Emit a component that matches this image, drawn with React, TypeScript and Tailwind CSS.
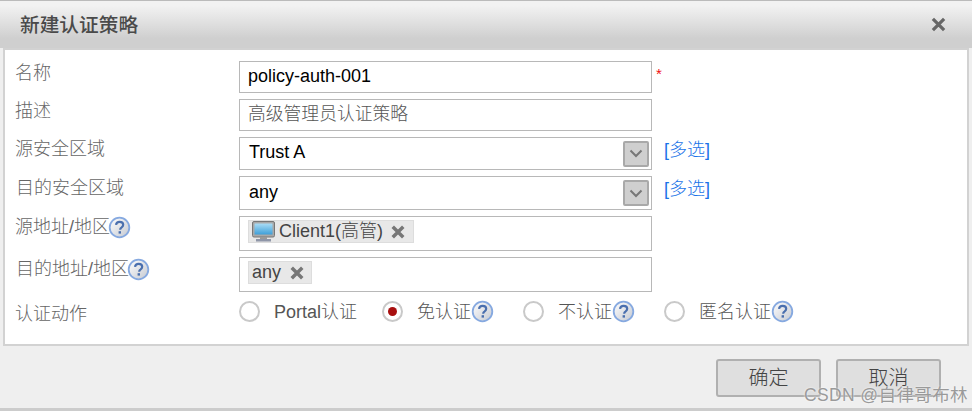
import React from "react";

const FONT = "font-['Liberation_Sans','Noto_Sans_CJK_SC',sans-serif]";

function Help() {
  const id = React.useId();
  return (
    <svg width="23" height="23" viewBox="0 0 23 23" className="shrink-0">
      <defs>
        <linearGradient id={id} x1="0" y1="0" x2="1" y2="1">
          <stop offset="0" stopColor="#ffffff" />
          <stop offset="1" stopColor="#c4c8d0" />
        </linearGradient>
      </defs>
      <circle cx="11.5" cy="11.5" r="9.8" fill={`url(#${id})`} stroke="#86a9e0" strokeWidth="1.8" />
      <path d="M8 8.8c.3-2 1.7-3 3.6-3 2.1 0 3.6 1.2 3.6 3 0 1.4-.8 2.1-1.8 2.8-.9.6-1.2 1-1.2 2.1" fill="none" stroke="#4a6fae" strokeWidth="2.2" />
      <rect x="10.6" y="15.2" width="2.4" height="2.4" fill="#4a6fae" />
    </svg>
  );
}

function Cross({ size = 14, color = "#777", width = 3 }: { size?: number; color?: string; width?: number }) {
  return (
    <svg width={size} height={size} viewBox="0 0 12 12" className="shrink-0">
      <path d="M1.5 1.5l9 9M10.5 1.5l-9 9" stroke={color} strokeWidth={width} />
    </svg>
  );
}

function Monitor() {
  return (
    <svg width="23" height="21" viewBox="0 0 23 21" className="shrink-0">
      <defs>
        <linearGradient id="scr" x1="0" y1="0" x2="0" y2="1">
          <stop offset="0" stopColor="#a9dcf5" />
          <stop offset="1" stopColor="#3f9fd8" />
        </linearGradient>
      </defs>
      <rect x="0.5" y="0.5" width="22" height="15.5" rx="1.5" fill="#a8a8a8" stroke="#777" />
      <rect x="2.5" y="2.5" width="18" height="11" fill="url(#scr)" />
      <rect x="8" y="16" width="7" height="2" fill="#999" />
      <rect x="4" y="18" width="15" height="2.5" fill="#8f96a8" />
    </svg>
  );
}

function Chevron() {
  return (
    <div className="w-[26px] h-[26px] bg-[#cfcfcf] border-2 border-[#a9a9a9] rounded-[2px] flex items-center justify-center">
      <svg width="14" height="9" viewBox="0 0 14 9">
        <path d="M1.5 1.5L7 7l5.5-5.5" fill="none" stroke="#777" strokeWidth="2" />
      </svg>
    </div>
  );
}

function Row({ label, labelPl = "pl-0", labelPt, h, mb, help, children, extra }: {
  label: string; labelPl?: string; labelPt: string; h: string; mb: string; help?: boolean; children: React.ReactNode; extra?: React.ReactNode;
}) {
  return (
    <div className={`flex ${h} ${mb}`}>
      <div className={`w-[224px] shrink-0 flex items-start ${labelPl} ${labelPt} text-[#666] text-[18px] leading-[22px] font-light`}>
        <span>{label}</span>
        {help && <span className="-ml-[2px]"><Help /></span>}
      </div>
      <div className="w-[413px] shrink-0 border border-[#b8b8b8] bg-white flex items-center">
        {children}
      </div>
      {extra}
    </div>
  );
}

function Multi({ pt }: { pt: string }) {
  return <a className={`ml-[12px] ${pt} text-[#1a73e8] text-[18px] leading-[22px] font-light`}>[多选]</a>;
}

function Radio({ checked, label, help, w, gap }: { checked?: boolean; label: string; help?: boolean; w: string; gap: string }) {
  return (
    <div className={`flex items-center ${w}`}>
      <span className="w-[21px] h-[21px] rounded-full border-2 border-[#c9c9c9] bg-white flex items-center justify-center shrink-0">
        {checked && <span className="w-[9px] h-[9px] rounded-full bg-[#a80f0f]" />}
      </span>
      <span className={`${gap} pt-[2px] text-[#555] text-[18px] leading-[22px] font-light whitespace-nowrap`}>{label}</span>
      {help && <Help />}
    </div>
  );
}

export default function App() {
  return (
    <div className={`relative w-[972px] h-[411px] overflow-hidden flex flex-col bg-[#efefef] border-t border-[#bbbbbb] ${FONT}`}>
      <header className="h-[47px] shrink-0 flex items-center justify-between pl-[20px] pr-[26px] bg-gradient-to-b from-[#f2f2f2] from-10% to-[#cfcfcf] to-80%">
        <h1 className="text-[#4a4a4a] text-[19.7px] leading-[26px] font-medium">新建认证策略</h1>
        <Cross size={15} color="#666" width={2.6} />
      </header>
      <main className="h-[298px] shrink-0 mx-[3px] border-2 border-[#d2d2d2] bg-white pl-[10px] pt-[11px]">
        <Row label="名称" labelPt="pt-[1px]" h="h-[32px]" mb="mb-[6px]"
          extra={<span className="ml-[4px] text-[#f01010] text-[15px] leading-[18px] pt-[4px]">*</span>}>
          <span className="pl-[8px] -mt-[2px] text-[18px] text-black">policy-auth-001</span>
        </Row>
        <Row label="描述" labelPt="pt-[1px]" h="h-[32px]" mb="mb-[6px]">
          <span className="pl-[8px] -mt-[2px] text-[17.8px] text-[#555] font-light">高级管理员认证策略</span>
        </Row>
        <Row label="源安全区域" labelPt="pt-[1px]" h="h-[33px]" mb="mb-[6px]" extra={<Multi pt="pt-[2px]" />}>
          <div className="flex-1 flex items-center justify-between pr-[2px]">
            <span className="pl-[9px] -mt-[2px] text-[18px] text-black">Trust A</span>
            <Chevron />
          </div>
        </Row>
        <Row label="目的安全区域" labelPl="pl-[1px]" labelPt="pt-[1px]" h="h-[34px]" mb="mb-[6px]" extra={<Multi pt="pt-[2px]" />}>
          <div className="flex-1 flex items-center justify-between pr-[2px]">
            <span className="pl-[9px] -mt-[2px] text-[18px] text-black">any</span>
            <Chevron />
          </div>
        </Row>
        <Row label="源地址/地区" labelPt="pt-0" h="h-[35px]" mb="mb-[6px]" help>
          <div className="ml-[8px] -mt-[4px] h-[23px] w-[166px] bg-[#e8e8e8] border border-[#dddddd] flex items-center pl-[3px]">
            <Monitor />
            <span className="ml-[4px] text-[18px] text-[#444] whitespace-nowrap">Client1<span className="font-light">(高管)</span></span>
            <span className="ml-[8px]"><Cross /></span>
          </div>
        </Row>
        <Row label="目的地址/地区" labelPl="pl-[1px]" labelPt="pt-[1px]" h="h-[35px]" mb="mb-[7px]" help>
          <div className="ml-[8px] -mt-[4px] h-[23px] w-[64px] bg-[#e8e8e8] border border-[#dddddd] flex items-center pl-[3px]">
            <span className="text-[18px] text-[#444]">any</span>
            <span className="ml-[9px]"><Cross /></span>
          </div>
        </Row>
        <div className="flex h-[24px] items-center">
          <div className="w-[224px] shrink-0 text-[#666] text-[18px] leading-[22px] font-light pt-[5px]">认证动作</div>
          <Radio label="Portal认证" w="w-[143px]" gap="ml-[14px]" />
          <Radio checked label="免认证" help w="w-[141px]" gap="ml-[14px]" />
          <Radio label="不认证" help w="w-[141px]" gap="ml-[14px]" />
          <Radio label="匿名认证" help w="w-[135px]" gap="ml-[14px]" />
        </div>
      </main>
      <footer className="flex-1 flex justify-end items-start pt-[13px] pr-[31px] gap-[15px] border-b-[3px] border-[#cccccc]">
        <button className="w-[105px] h-[38px] bg-[#dfdfdf] border-2 border-[#b0b0b0] rounded-[3px] text-[20px] text-[#444] font-light">确定</button>
        <button className="w-[105px] h-[38px] bg-[#dfdfdf] border-2 border-[#b0b0b0] rounded-[3px] text-[20px] text-[#444] font-light">取消</button>
      </footer>
      <div className="absolute right-[4px] bottom-[5px] text-[17.5px] leading-[22px] text-[#9a9a9a] tracking-[0.4px] [text-shadow:0_0_2px_#ffffff]">CSDN @自律哥布林</div>
    </div>
  );
}
